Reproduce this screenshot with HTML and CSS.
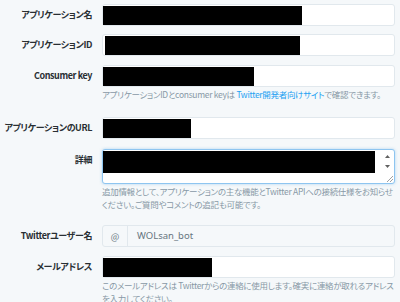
FILE: index.html
```html
<!DOCTYPE html>
<html lang="ja">
<head>
<meta charset="utf-8">
<link rel="stylesheet" href="styles.css">
</head>
<body>
<form class="form">
  <div class="row r1">
    <label class="lbl">アプリケーション名</label>
    <div class="ctl"><div class="box"><span class="redact" style="width:199px"></span></div></div>
  </div>
  <div class="row r2">
    <label class="lbl">アプリケーションID</label>
    <div class="ctl"><div class="box"><span class="redact" style="width:195px;margin-left:2px"></span></div></div>
  </div>
  <div class="row r3">
    <label class="lbl">Consumer key</label>
    <div class="ctl">
      <div class="box"><span class="redact" style="width:151px"></span></div>
      <p class="help">アプリケーションIDとconsumer keyは <a class="link">Twitter開発者向けサイト</a>で確認できます。</p>
    </div>
  </div>
  <div class="row r4">
    <label class="lbl">アプリケーションのURL</label>
    <div class="ctl"><div class="box"><span class="redact" style="width:88px"></span></div></div>
  </div>
  <div class="row r5">
    <label class="lbl">詳細</label>
    <div class="ctl">
      <div class="area">
        <span class="redact area-redact"></span>
        <span class="scroll">
          <svg class="arr" width="5" height="3" viewBox="0 0 5 3"><path d="M0 3L2.5 0L5 3Z" fill="#606060"/></svg>
          <svg class="arr" width="5" height="3" viewBox="0 0 5 3"><path d="M0 0L2.5 3L5 0Z" fill="#606060"/></svg>
        </span>
        <svg class="grip" width="7" height="7" viewBox="0 0 7 7"><path d="M7 1L1 7M7 4L4 7" stroke="#a0a0a0" stroke-width="1"/></svg>
      </div>
      <p class="help">追加情報として、アプリケーションの主な機能とTwitter APIへの接続仕様をお知らせください。ご質問やコメントの追記も可能です。</p>
    </div>
  </div>
  <div class="row r6">
    <label class="lbl">Twitterユーザー名</label>
    <div class="ctl">
      <div class="group">
        <span class="addon">@</span>
        <span class="gval">WOLsan_bot</span>
      </div>
    </div>
  </div>
  <div class="row r7">
    <label class="lbl">メールアドレス</label>
    <div class="ctl">
      <div class="box"><span class="redact" style="width:109px"></span></div>
      <p class="help">このメールアドレスは Twitterからの連絡に使用します。確実に連絡が取れるアドレスを入力してください。</p>
    </div>
  </div>
</form>
</body>
</html>
```
FILE: styles.css
```css
html, body {
  margin: 0;
  padding: 0;
  background: #f5f8fa;
}
body {
  font-family: "Noto Sans CJK JP", "Noto Sans", sans-serif;
  font-feature-settings: "palt";
  width: 400px;
  height: 302px;
  overflow: hidden;
}
.form {
  padding: 4px 5px 0 0;
}
.row {
  display: grid;
  grid-template-columns: 92px 1fr;
  column-gap: 10px;
  align-items: start;
}
.lbl {
  text-align: right;
  font-size: 9px;
  font-weight: bold;
  color: #292f33;
  line-height: 22px;
  white-space: nowrap;
  letter-spacing: -0.4px;
}
.box {
  height: 20px;
  background: #fff;
  border: 1px solid #e1e8ed;
  border-radius: 3px;
  display: flex;
  align-items: flex-end;
}
.redact {
  display: block;
  background: #000;
  height: 19px;
}
.r1 { margin-bottom: 8px; }
.r2 { margin-bottom: 9px; }
.r3 { margin-bottom: 16px; }
.r4 { margin-bottom: 10px; }
.r5 { margin-bottom: 14px; }
.r6 { margin-bottom: 9px; }
.help {
  margin: 1px 0 0;
  font-size: 8.5px;
  line-height: 13px;
  color: #8899a6;
  letter-spacing: -0.3px;
}
.link { color: #1da1f2; }
.area {
  position: relative;
  height: 33px;
  background: #fff;
  border: 1px solid #8ec5f0;
  border-radius: 3px;
  box-shadow: 0 0 3px rgba(102, 175, 233, 0.5);
  display: flex;
  align-items: flex-start;
}
.area-redact {
  width: 272px;
  height: 22px;
  margin-top: 1px;
}
.scroll {
  position: absolute;
  right: 0;
  top: 0;
  bottom: 0;
  width: 13px;
  display: flex;
  flex-direction: column;
  align-items: center;
  gap: 7px;
  padding-top: 5px;
  box-sizing: border-box;
}
.grip {
  position: absolute;
  right: 1px;
  bottom: 1px;
}
.group {
  display: flex;
  height: 20px;
  border: 1px solid #e1e8ed;
  border-radius: 3px;
  background: #f5f8fa;
  color: #66757f;
}
.addon {
  width: 24px;
  border-right: 1px solid #e1e8ed;
  display: flex;
  align-items: center;
  justify-content: center;
  font-size: 9px;
}
.gval {
  padding-left: 9px;
  line-height: 20px;
  font-size: 9.5px;
  font-family: "Noto Sans", sans-serif;
}
```
